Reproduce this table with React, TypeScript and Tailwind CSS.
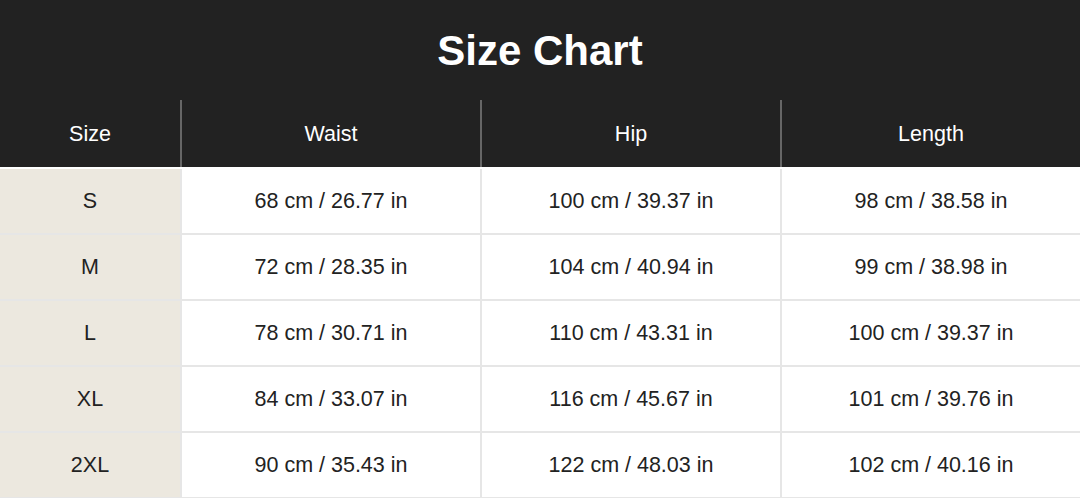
import React from 'react';

const rows = [
  { size: 'S', waist: '68 cm / 26.77 in', hip: '100 cm / 39.37 in', length: '98 cm / 38.58 in' },
  { size: 'M', waist: '72 cm / 28.35 in', hip: '104 cm / 40.94 in', length: '99 cm / 38.98 in' },
  { size: 'L', waist: '78 cm / 30.71 in', hip: '110 cm / 43.31 in', length: '100 cm / 39.37 in' },
  { size: 'XL', waist: '84 cm / 33.07 in', hip: '116 cm / 45.67 in', length: '101 cm / 39.76 in' },
  { size: '2XL', waist: '90 cm / 35.43 in', hip: '122 cm / 48.03 in', length: '102 cm / 40.16 in' },
];

export default function App() {
  return (
    <main
      className="w-[1080px] h-[498px] overflow-hidden bg-white"
      style={{ fontFamily: '"Liberation Sans", Arial, sans-serif' }}
    >
      <div className="bg-[#222222]">
        <h1 className="h-[100px] flex items-center justify-center text-[42px] font-bold text-white">
          Size Chart
        </h1>
        <div className="grid grid-cols-[180px_300px_300px_300px] h-[67px] text-[21.5px] text-white">
          <div className="flex items-center justify-center pt-[2px]">Size</div>
          <div className="flex items-center justify-center pt-[2px] border-l-2 border-[#666666]">Waist</div>
          <div className="flex items-center justify-center pt-[2px] border-l-2 border-[#666666]">Hip</div>
          <div className="flex items-center justify-center pt-[2px] border-l-2 border-[#666666]">Length</div>
        </div>
      </div>
      <div className="text-[21.5px] text-[#222222]">
        {rows.map((r, i) => (
          <div
            key={r.size}
            className={
              i === 0
                ? 'grid grid-cols-[180px_300px_300px_300px] h-[68px] pt-[2px] border-b-2 border-[#e6e6e6]'
                : 'grid grid-cols-[180px_300px_300px_300px] h-[66px] border-b-2 border-[#e6e6e6]'
            }
          >
            <div className="flex items-center justify-center bg-[#ece8df]">{r.size}</div>
            <div className="flex items-center justify-center border-l-2 border-[#e6e6e6]">{r.waist}</div>
            <div className="flex items-center justify-center border-l-2 border-[#e6e6e6]">{r.hip}</div>
            <div className="flex items-center justify-center border-l-2 border-[#e6e6e6]">{r.length}</div>
          </div>
        ))}
      </div>
    </main>
  );
}
